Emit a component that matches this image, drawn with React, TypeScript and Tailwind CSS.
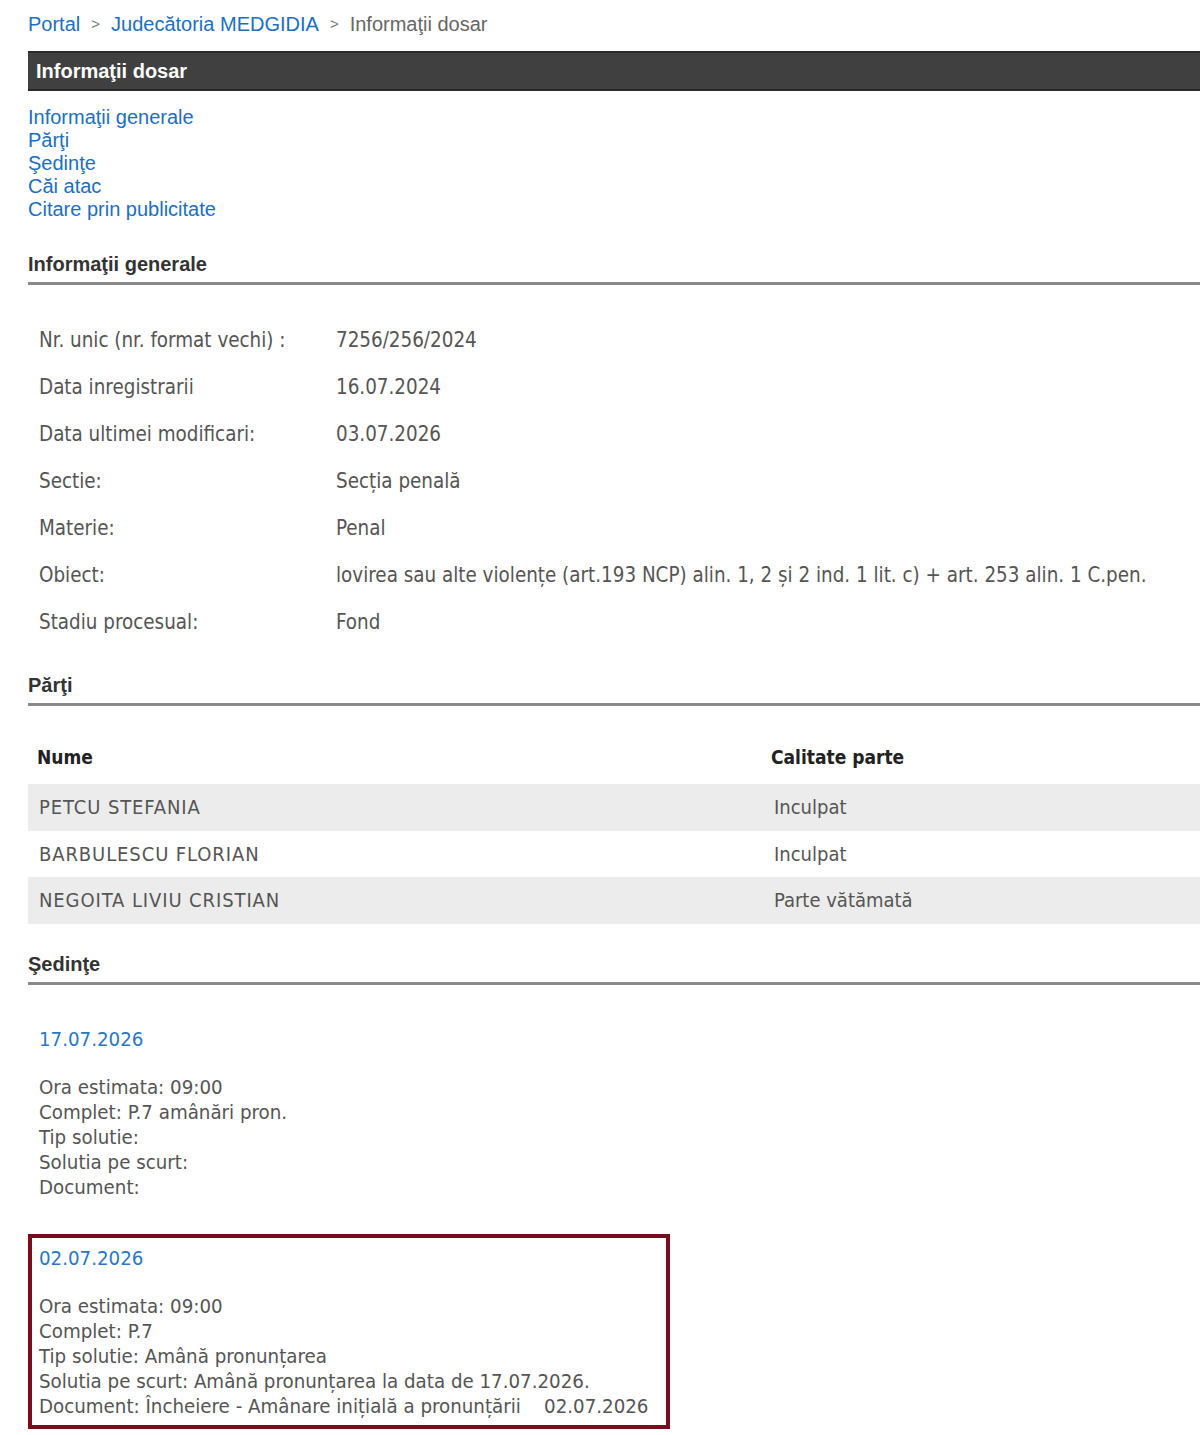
import * as React from "react"

const generalInfo = [
  { label: "Nr. unic (nr. format vechi) :", value: "7256/256/2024" },
  { label: "Data inregistrarii", value: "16.07.2024" },
  { label: "Data ultimei modificari:", value: "03.07.2026" },
  { label: "Sectie:", value: "Secția penală" },
  { label: "Materie:", value: "Penal" },
  {
    label: "Obiect:",
    value: "lovirea sau alte violențe (art.193 NCP) alin. 1, 2 și 2 ind. 1 lit. c) + art. 253 alin. 1 C.pen.",
  },
  { label: "Stadiu procesual:", value: "Fond" },
]

const parti = [
  { nume: "PETCU STEFANIA", calitate: "Inculpat" },
  { nume: "BARBULESCU FLORIAN", calitate: "Inculpat" },
  { nume: "NEGOITA LIVIU CRISTIAN", calitate: "Parte vătămată" },
]

const sedinte = [
  {
    data: "17.07.2026",
    ora: "09:00",
    complet: "P.7 amânări pron.",
    tip: "",
    solutie: "",
    document: "",
    highlight: false,
  },
  {
    data: "02.07.2026",
    ora: "09:00",
    complet: "P.7",
    tip: "Amână pronunțarea",
    solutie: "Amână pronunțarea la data de 17.07.2026.",
    document: "Încheiere - Amânare inițială a pronunțării\u00a0\u00a0\u00a0\u00a002.07.2026",
    highlight: true,
  },
]

function SectionTitle({ children }: { children: React.ReactNode }) {
  return (
    <div className="border-b-[3px] border-[#8a8a8a] pb-[6px] font-['Liberation_Sans',Arial,sans-serif] text-[20px] font-bold leading-[24px] text-[#333]">
      {children}
    </div>
  )
}

export default function App() {
  return (
    <div className="min-h-[1435px] bg-white pl-[28px] font-['Liberation_Sans',Arial,sans-serif]">
      {/* breadcrumb */}
      <div className="flex items-center gap-[11px] pt-[12px] text-[20px] leading-[24px]">
        <span className="text-[#1b6fc2]">Portal</span>
        <span className="text-[15px] text-[#777]">&gt;</span>
        <span className="text-[#1b6fc2]">Judecătoria MEDGIDIA</span>
        <span className="text-[15px] text-[#777]">&gt;</span>
        <span className="text-[#666]">Informaţii dosar</span>
      </div>

      <div className="mt-[15px] flex h-[40px] items-center border-y-2 border-[#2a2a2a] bg-[#404040] pl-[8px] text-[20px] font-bold text-white">
        Informaţii dosar
      </div>

      <div className="mt-[15px] flex flex-col text-[20px] leading-[23px] text-[#1b6fc2]">
        <a href="#generale">Informaţii generale</a>
        <a href="#parti">Părţi</a>
        <a href="#sedinte">Şedinţe</a>
        <a href="#cai">Căi atac</a>
        <a href="#citare">Citare prin publicitate</a>
      </div>

      <div className="mt-[31px] font-['DejaVu_Sans_Condensed','DejaVu_Sans',sans-serif]">
        <SectionTitle>Informaţii generale</SectionTitle>
        <div className="flex flex-col pt-[32px] text-[20.4px] text-[#555]">
          {generalInfo.map((row) => (
            <div key={row.label} className="flex h-[47px] items-center pl-[11px]">
              <div className="w-[297px] shrink-0">{row.label}</div>
              <div>{row.value}</div>
            </div>
          ))}
        </div>

        <div className="mt-[27px]">
          <SectionTitle>Părţi</SectionTitle>
        </div>
        <div className="flex flex-col pt-[24px] text-[20px]">
          <div className="flex h-[54px] items-center pl-[9px] text-[19px] font-bold text-[#222]">
            <div className="w-[734px] shrink-0">Nume</div>
            <div>Calitate parte</div>
          </div>
          {parti.map((p, i) => (
            <div
              key={p.nume}
              className={`flex h-[46.5px] items-center pl-[11px] text-[#555] ${i % 2 === 0 ? "bg-[#ececec]" : "bg-white"}`}
            >
              <div className="w-[735px] shrink-0 tracking-[0.9px]">{p.nume}</div>
              <div>{p.calitate}</div>
            </div>
          ))}
        </div>

        <div className="mt-[28px]">
          <SectionTitle>Şedinţe</SectionTitle>
        </div>
        <div className="flex flex-col gap-[34px] pt-[42px]">
          {sedinte.map((s) => (
            <div
              key={s.data}
              className={
                s.highlight
                  ? "w-[642px] border-4 border-[#7a0c1e] pl-[7px] pt-[8px] pb-[6px]"
                  : "pl-[11px]"
              }
            >
              <div className="text-[20.3px] leading-[24px] text-[#2a78c4]">{s.data}</div>
              <div className="mt-[24px] flex flex-col text-[20.3px] leading-[25px] text-[#555]">
                <div>Ora estimata: {s.ora}</div>
                <div>Complet: {s.complet}</div>
                <div>Tip solutie: {s.tip}</div>
                <div>Solutia pe scurt: {s.solutie}</div>
                <div>Document: {s.document}</div>
              </div>
            </div>
          ))}
        </div>
      </div>
    </div>
  )
}
